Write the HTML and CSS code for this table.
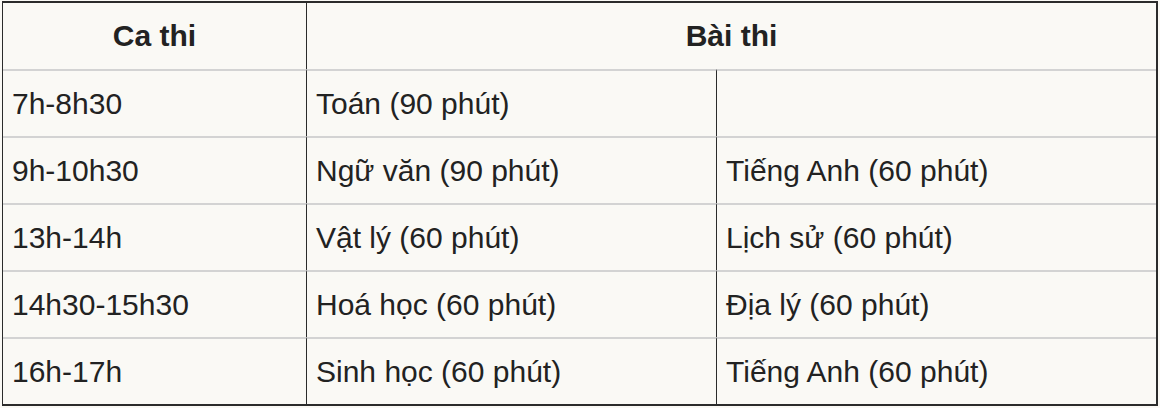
FILE: index.html
```html
<!DOCTYPE html>
<html lang="vi">
<head>
<meta charset="utf-8">
<title>Lịch thi</title>
<link rel="stylesheet" href="styles.css">
</head>
<body>
<div class="wrap">
<table class="schedule">
  <colgroup>
    <col class="c1">
    <col class="c2">
    <col class="c3">
  </colgroup>
  <thead>
    <tr>
      <th class="first">Ca thi</th>
      <th class="sep" colspan="2">Bài thi</th>
    </tr>
  </thead>
  <tbody>
    <tr><td class="first">7h-8h30</td><td class="sep">Toán (90 phút)</td><td class="sep"></td></tr>
    <tr><td class="first">9h-10h30</td><td class="sep">Ngữ văn (90 phút)</td><td class="sep">Tiếng Anh (60 phút)</td></tr>
    <tr><td class="first">13h-14h</td><td class="sep">Vật lý (60 phút)</td><td class="sep">Lịch sử (60 phút)</td></tr>
    <tr><td class="first">14h30-15h30</td><td class="sep">Hoá học (60 phút)</td><td class="sep">Địa lý (60 phút)</td></tr>
    <tr><td class="first">16h-17h</td><td class="sep">Sinh học (60 phút)</td><td class="sep">Tiếng Anh (60 phút)</td></tr>
  </tbody>
</table>
</div>
</body>
</html>
```

FILE: styles.css
```css
html, body {
  margin: 0;
  padding: 0;
  background: #faf9f5;
}

.wrap {
  padding: 1px 2px 0 2px;
}

.schedule {
  width: 1156px;
  table-layout: fixed;
  border-collapse: separate;
  border-spacing: 0;
  border-top: 2px solid #2b2b2b;
  border-right: 2px solid #2b2b2b;
  border-bottom: 2px solid #2b2b2b;
  border-left: 1px solid #2b2b2b;
  font-family: "Liberation Sans", Arial, sans-serif;
  font-size: 30px;
  color: #222;
  background: #faf9f5;
}

.c1 { width: 303px; }
.c2 { width: 410px; }
.c3 { width: 440px; }

.schedule th {
  padding: 0;
  line-height: 66px;
  font-weight: bold;
  text-align: center;
}

.schedule td {
  padding: 0 9px;
  line-height: 65px;
  text-align: left;
  border-top: 2px solid #d3d3d3;
  white-space: nowrap;
}

.schedule .sep {
  border-left: 1px solid #2b2b2b;
}
```
